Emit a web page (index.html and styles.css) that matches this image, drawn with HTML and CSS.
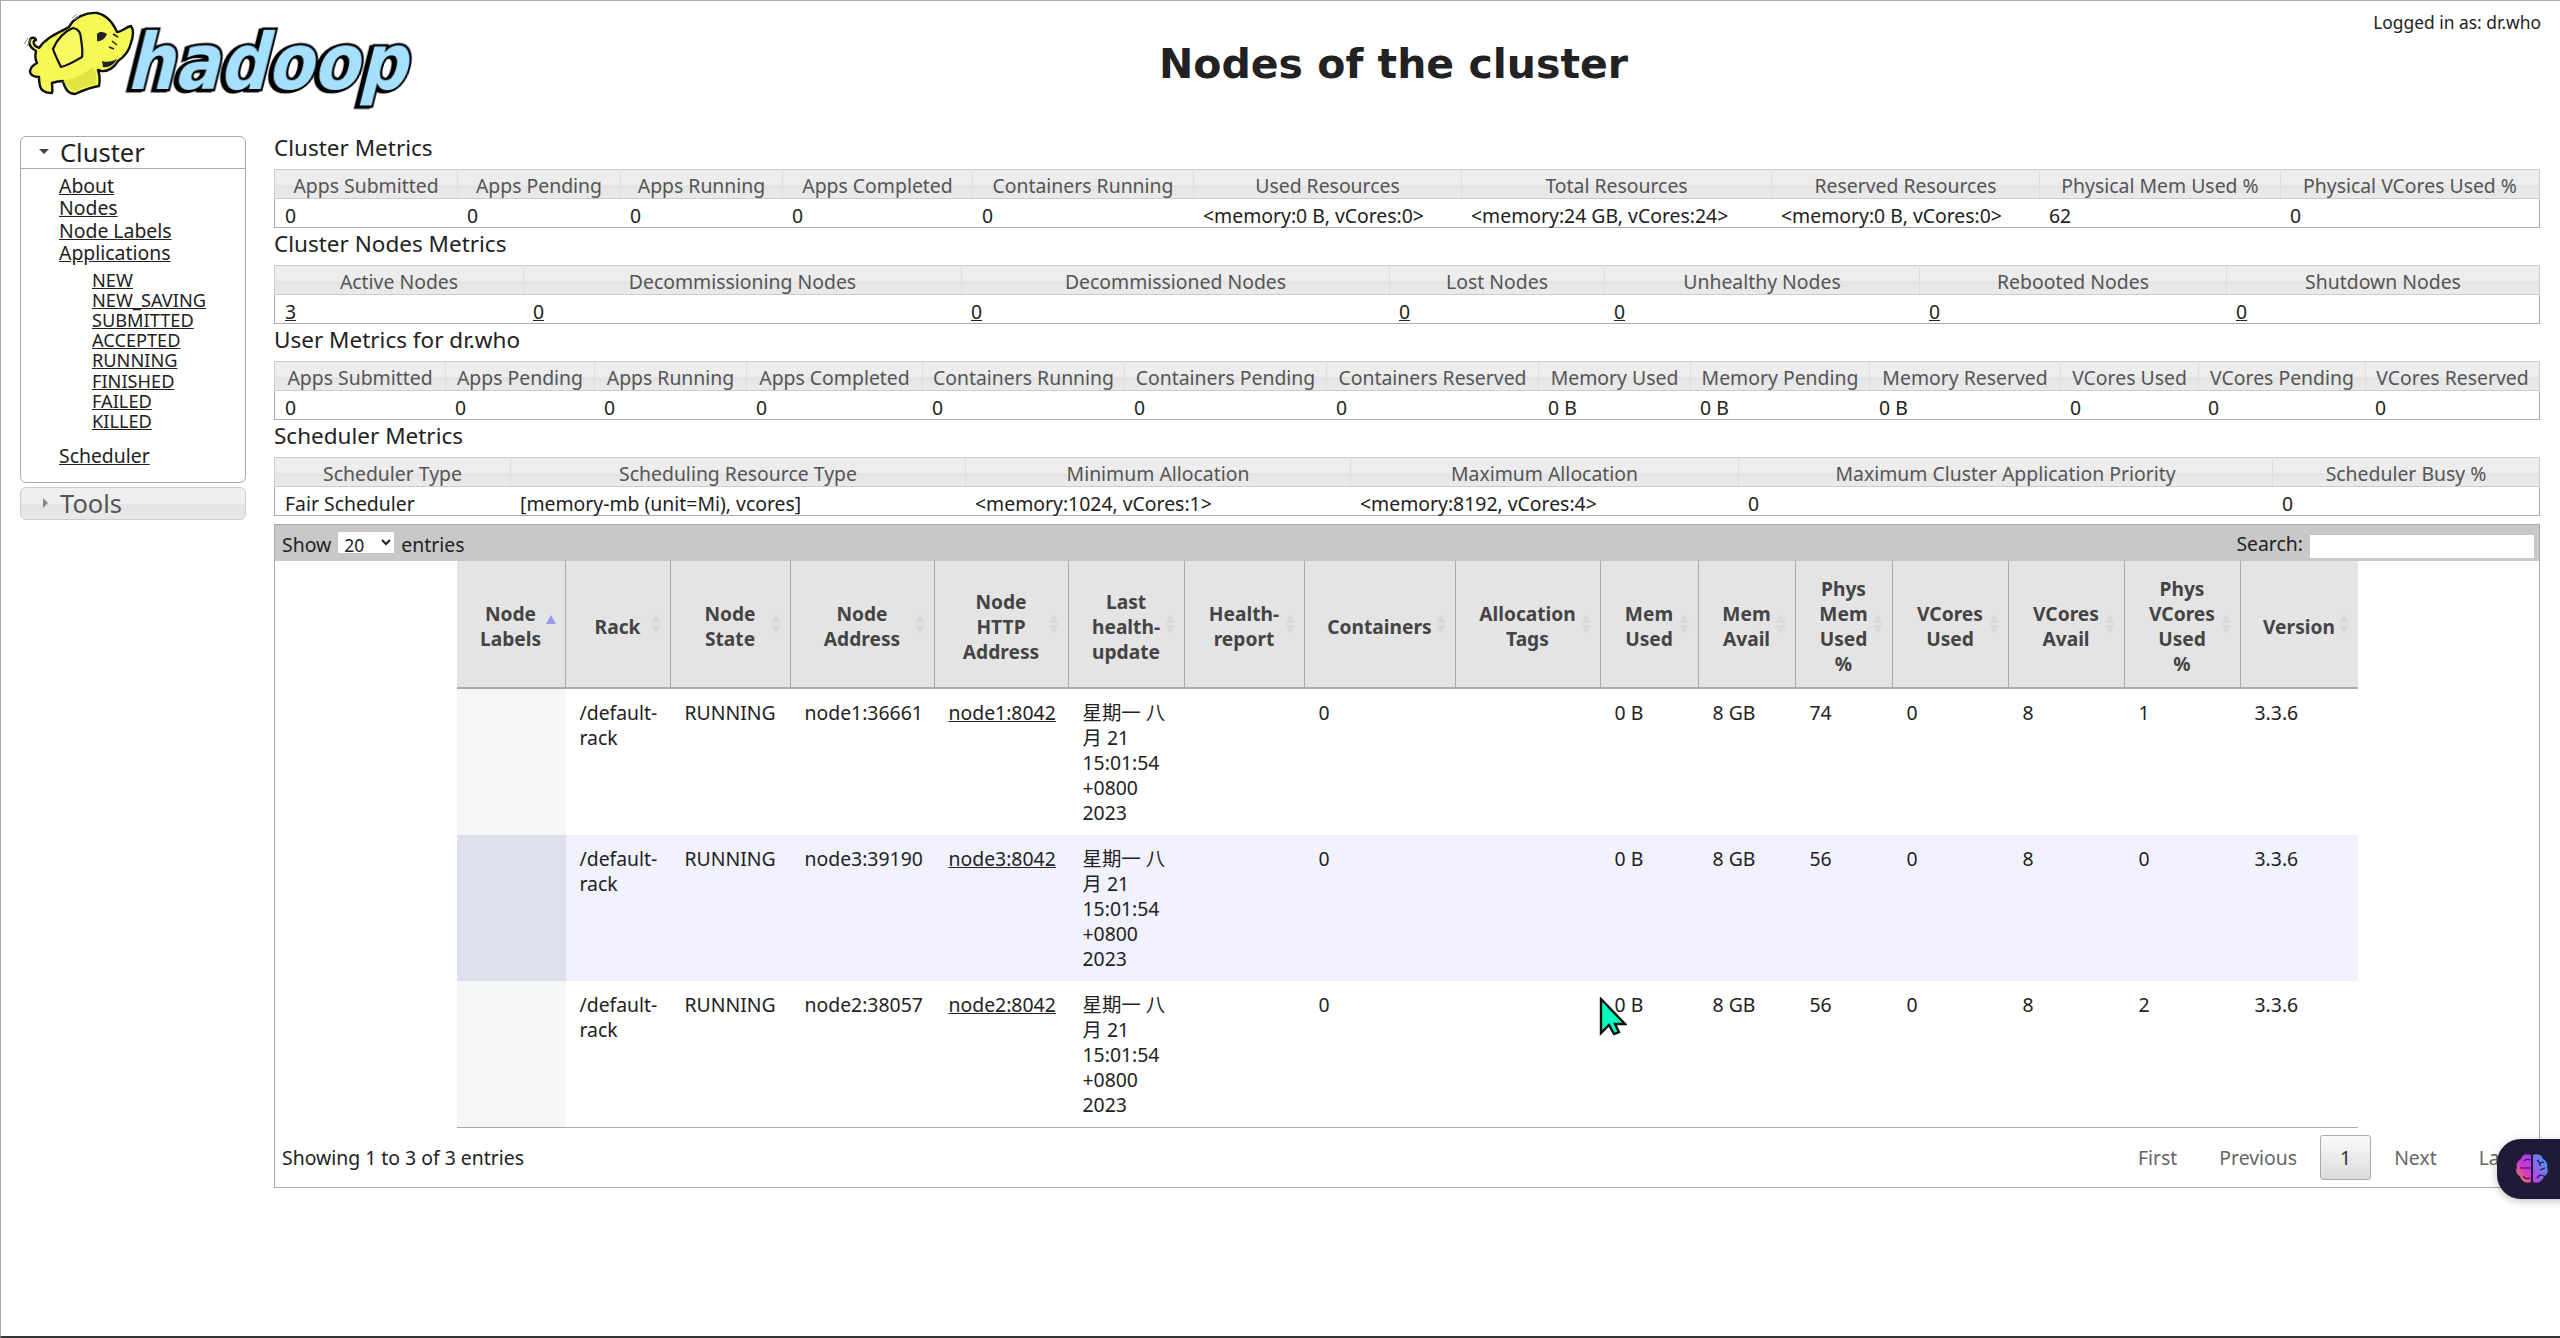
FILE: index.html
```html
<!DOCTYPE html>
<html lang="en">
<head>
    <meta charset="UTF-8">
    <meta name="viewport" content="width=device-width, initial-scale=1.0">
    <title>Nodes of the cluster</title>
    <link rel="stylesheet" href="styles.css">
</head>
<body>
<div class="page">
    <div class="header">
        <div class="logo">
            <svg width="420" height="110" viewBox="0 0 420 110">
                <text class="logo-word" x="0" y="0" transform="translate(125 88) skewX(-14)" textLength="280" lengthAdjust="spacingAndGlyphs">hadoop</text>
                <!-- elephant -->
                <path d="M35 50 C30 47 27 43 29 39 C30 36 34 36 35 39 C33 39 32 41 33 43 C34 46 37 46 38 47 C45 36 58 32 68 26 C73 16 86 11 96 12 C106 14 112 22 116 31 C120 31 125 26 130 25 C133 29 132 36 130 42 C128 50 123 56 117 60 C114 66 107 71 100 70 L97 69 C99 75 99 80 98 85 C91 86 83 89 74 93 C68 93 64 89 62 80 C57 80 54 81 51 82 C51 86 52 89 51 92 C45 92 40 90 39 85 C38 81 38 79 38 76 C33 76 29 74 29 70 C30 65 34 63 36 62 C34 58 34 54 35 50 Z" fill="#f5f855" stroke="#111" stroke-width="2.4" stroke-linejoin="round"/>
                <path d="M62 80 C72 78 82 74 92 66 C96 74 96 80 95 83 C88 84 82 86 75 90 C70 90 66 86 62 80 Z" fill="#d8dc3c" opacity=".7"/>
                <path d="M52 48 C56 38 64 30 72 27 C78 28 80 32 80 38 C81 44 82 50 81 56 C74 60 68 64 60 66 C57 60 54 54 52 48 Z" fill="#f7fa62" stroke="#111" stroke-width="2.2" stroke-linejoin="round"/>
                <path d="M96 33 C99 30 103 31 106 33 C104 38 99 41 96 40 Z" fill="#222"/>
                <path d="M112 33 L117 36 M111 40 L116 44 M108 46 L113 48" stroke="#222" stroke-width="1.5" fill="none"/>
                <path d="M101 60 C106 62 112 60 116 58 C113 64 107 67 102 66 Z" fill="#222"/>
                <path d="M71 17 L76 13 M73 19 L78 15" stroke="#999" stroke-width="1"/>
                <path d="M23 43 L27 37 M26 45 L30 38" stroke="#888" stroke-width="1"/>
            </svg>
        </div>
        <h1 class="title">Nodes of the cluster</h1>
        <div class="user">Logged in as: dr.who</div>
    </div>

    <div class="content">
        <div class="nav">
            <div class="nav-box">
                <h3 class="nav-title"><span class="arrow-down"></span>Cluster</h3>
                <ul class="nav-links">
                    <li><a href="#">About</a></li>
                    <li><a href="#">Nodes</a></li>
                    <li><a href="#">Node Labels</a></li>
                    <li><a href="#">Applications</a>
                        <ul class="nav-sub">
                            <li><a href="#">NEW</a></li>
                            <li><a href="#">NEW_SAVING</a></li>
                            <li><a href="#">SUBMITTED</a></li>
                            <li><a href="#">ACCEPTED</a></li>
                            <li><a href="#">RUNNING</a></li>
                            <li><a href="#">FINISHED</a></li>
                            <li><a href="#">FAILED</a></li>
                            <li><a href="#">KILLED</a></li>
                        </ul>
                    </li>
                    <li><a href="#">Scheduler</a></li>
                </ul>
            </div>
            <h3 class="nav-closed"><span class="arrow-right"></span>Tools</h3>
        </div>

        <div class="main">
            <h3 class="metrics-title">Cluster Metrics</h3>
            <table class="metrics m-cluster">
                <colgroup><col><col><col><col><col><col><col><col><col><col></colgroup>
                <tr><th>Apps Submitted</th><th>Apps Pending</th><th>Apps Running</th><th>Apps Completed</th><th>Containers Running</th><th>Used Resources</th><th>Total Resources</th><th>Reserved Resources</th><th>Physical Mem Used %</th><th>Physical VCores Used %</th></tr>
                <tr><td>0</td><td>0</td><td>0</td><td>0</td><td>0</td><td>&lt;memory:0 B, vCores:0&gt;</td><td>&lt;memory:24 GB, vCores:24&gt;</td><td>&lt;memory:0 B, vCores:0&gt;</td><td>62</td><td>0</td></tr>
            </table>

            <h3 class="metrics-title">Cluster Nodes Metrics</h3>
            <table class="metrics m-nodes">
                <colgroup><col><col><col><col><col><col><col></colgroup>
                <tr><th>Active Nodes</th><th>Decommissioning Nodes</th><th>Decommissioned Nodes</th><th>Lost Nodes</th><th>Unhealthy Nodes</th><th>Rebooted Nodes</th><th>Shutdown Nodes</th></tr>
                <tr><td><a href="#">3</a></td><td><a href="#">0</a></td><td><a href="#">0</a></td><td><a href="#">0</a></td><td><a href="#">0</a></td><td><a href="#">0</a></td><td><a href="#">0</a></td></tr>
            </table>

            <h3 class="metrics-title">User Metrics for dr.who</h3>
            <table class="metrics m-user">
                <colgroup><col><col><col><col><col><col><col><col><col><col><col><col><col></colgroup>
                <tr><th>Apps Submitted</th><th>Apps Pending</th><th>Apps Running</th><th>Apps Completed</th><th>Containers Running</th><th>Containers Pending</th><th>Containers Reserved</th><th>Memory Used</th><th>Memory Pending</th><th>Memory Reserved</th><th>VCores Used</th><th>VCores Pending</th><th>VCores Reserved</th></tr>
                <tr><td>0</td><td>0</td><td>0</td><td>0</td><td>0</td><td>0</td><td>0</td><td>0 B</td><td>0 B</td><td>0 B</td><td>0</td><td>0</td><td>0</td></tr>
            </table>

            <h3 class="metrics-title">Scheduler Metrics</h3>
            <table class="metrics m-sched">
                <colgroup><col><col><col><col><col><col></colgroup>
                <tr><th>Scheduler Type</th><th>Scheduling Resource Type</th><th>Minimum Allocation</th><th>Maximum Allocation</th><th>Maximum Cluster Application Priority</th><th>Scheduler Busy %</th></tr>
                <tr><td>Fair Scheduler</td><td>[memory-mb (unit=Mi), vcores]</td><td>&lt;memory:1024, vCores:1&gt;</td><td>&lt;memory:8192, vCores:4&gt;</td><td>0</td><td>0</td></tr>
            </table>

            <div class="dt">
                <div class="dt-toolbar">
                    <label class="dt-length">Show <select><option>20</option></select> entries</label>
                    <label class="dt-search">Search: <input type="text"></label>
                </div>
                <table class="nodes">
                    <colgroup><col><col><col><col><col><col><col><col><col><col><col><col><col><col><col><col></colgroup>
                    <thead>
                        <tr>
                            <th class="sort-asc">Node Labels</th>
                            <th class="sortable">Rack</th>
                            <th class="sortable">Node State</th>
                            <th class="sortable">Node Address</th>
                            <th class="sortable">Node HTTP Address</th>
                            <th class="sortable">Last health-update</th>
                            <th class="sortable">Health-report</th>
                            <th class="sortable">Containers</th>
                            <th class="sortable">Allocation Tags</th>
                            <th class="sortable">Mem Used</th>
                            <th class="sortable">Mem Avail</th>
                            <th class="sortable">Phys Mem Used %</th>
                            <th class="sortable">VCores Used</th>
                            <th class="sortable">VCores Avail</th>
                            <th class="sortable">Phys VCores Used<br>%</th>
                            <th class="sortable">Version</th>
                        </tr>
                    </thead>
                    <tbody>
                        <tr>
                            <td class="sorted"></td><td>/default-rack</td><td>RUNNING</td><td>node1:36661</td><td><a href="#">node1:8042</a></td><td>星期一 八月 21 15:01:54 +0800 2023</td><td></td><td>0</td><td></td><td>0 B</td><td>8 GB</td><td>74</td><td>0</td><td>8</td><td>1</td><td>3.3.6</td>
                        </tr>
                        <tr class="even">
                            <td class="sorted"></td><td>/default-rack</td><td>RUNNING</td><td>node3:39190</td><td><a href="#">node3:8042</a></td><td>星期一 八月 21 15:01:54 +0800 2023</td><td></td><td>0</td><td></td><td>0 B</td><td>8 GB</td><td>56</td><td>0</td><td>8</td><td>0</td><td>3.3.6</td>
                        </tr>
                        <tr>
                            <td class="sorted"></td><td>/default-rack</td><td>RUNNING</td><td>node2:38057</td><td><a href="#">node2:8042</a></td><td>星期一 八月 21 15:01:54 +0800 2023</td><td></td><td>0</td><td></td><td>0 B</td><td>8 GB</td><td>56</td><td>0</td><td>8</td><td>2</td><td>3.3.6</td>
                        </tr>
                    </tbody>
                </table>
                <div class="dt-footer">
                    <div class="dt-info">Showing 1 to 3 of 3 entries</div>
                    <div class="pager">
                        <a href="#">First</a>
                        <a href="#">Previous</a>
                        <a href="#" class="current">1</a>
                        <a href="#">Next</a>
                        <a href="#">Last</a>
                    </div>
                </div>
            </div>
        </div>
    </div>

    <svg class="cursor" width="28" height="40" viewBox="0 0 28 40">
        <path d="M2 2 L26 27 L16 27 L20 35 L15 37 L10 28 L2 36 Z" fill="#00ffbf" stroke="#111" stroke-width="2.4" stroke-linejoin="miter"/>
    </svg>

    <div class="badge">
        <svg width="34" height="32" viewBox="0 0 34 32">
            <defs>
                <linearGradient id="lobeL" x1="0" y1="1" x2="0.6" y2="0">
                    <stop offset="0" stop-color="#f79a1e"/>
                    <stop offset="0.55" stop-color="#d836c8"/>
                    <stop offset="1" stop-color="#b03af0"/>
                </linearGradient>
                <linearGradient id="lobeR" x1="0" y1="1" x2="0.8" y2="0">
                    <stop offset="0" stop-color="#c93ae0"/>
                    <stop offset="1" stop-color="#3f9bf5"/>
                </linearGradient>
            </defs>
            <path d="M16 2 C11 0 7 2 6 6 C2 8 1 12 2 14 C0 18 2 22 5 23 C6 28 11 31 16 29 Z" fill="url(#lobeL)"/>
            <path d="M18 2 C23 0 27 2 28 6 C32 8 33 12 32 15 C34 18 32 22 29 23 C28 28 23 31 18 29 Z" fill="url(#lobeR)"/>
            <path d="M5 15 H16 M9 8 C11 6 13 6 15 7 M8 23 C10 26 13 26 15 25 M22 7 L25 10 L29 9 M25 10 L25 13 M22 25 L25 22 L29 23 M25 17 L30 15" stroke="#1e1b3a" stroke-width="1.2" fill="none"/>
        </svg>
    </div>
</div>
</body>
</html>
```

FILE: styles.css
```css
html, body {
    margin: 0;
    padding: 0;
}
body {
    font-family: "Noto Sans", "Noto Sans CJK SC", sans-serif;
    font-size: 19.4px;
    color: #222;
    background-color: #fff;
}
a {
    color: #222;
}
.page {
    position: relative;
    box-sizing: border-box;
    height: 100vh;
    overflow: hidden;
    border-top: 1px solid #aaa;
    border-left: 1px solid #aaa;
    border-bottom: 2px solid #333;
}

/* header */
.header {
    display: flex;
    height: 131px;
}
.logo {
    flex: none;
    width: 226px;
}
.logo svg {
    display: block;
    overflow: visible;
}
.logo-word {
    font-family: "DejaVu Sans", sans-serif;
    font-weight: bold;
    font-size: 77px;
    fill: #a5e1ff;
    stroke: #000;
    stroke-width: 5px;
    paint-order: stroke;
    filter: drop-shadow(-3px 1px 0 #000);
}
.title {
    flex: 1;
    margin: 0;
    padding-top: 36px;
    text-align: center;
    font-family: "DejaVu Sans", sans-serif;
    font-size: 41px;
    line-height: 54px;
    font-weight: bold;
    color: #222;
}
.user {
    position: absolute;
    top: 9px;
    right: 19px;
    font-size: 17.4px;
    line-height: 24px;
}

/* layout */
.content {
    display: flex;
    gap: 28px;
    padding-left: 19px;
}
.nav {
    flex: none;
    width: 226px;
    padding-top: 4px;
}
.main {
    flex: none;
    width: 2266px;
}

/* left nav */
.nav-box {
    box-sizing: border-box;
    height: 347px;
    border: 1px solid #aaa;
    border-radius: 6px;
}
.nav-title {
    margin: 0;
    height: 31px;
    line-height: 31px;
    padding-left: 39px;
    font-size: 25.5px;
    font-weight: normal;
    color: #222;
    border-bottom: 1px solid #aaa;
    position: relative;
}
.arrow-down {
    position: absolute;
    left: 18px;
    top: 12px;
    border-left: 5px solid transparent;
    border-right: 5px solid transparent;
    border-top: 5px solid #444;
}
.arrow-right {
    position: absolute;
    left: 22px;
    top: 10px;
    border-top: 5px solid transparent;
    border-bottom: 5px solid transparent;
    border-left: 5px solid #888;
}
.nav-links {
    list-style: none;
    margin: 0;
    padding: 6px 0 0 38px;
    font-size: 19.4px;
    line-height: 22.4px;
}
.nav-sub {
    list-style: none;
    margin: 5px 0 14px 0;
    padding: 0 0 0 33px;
    font-size: 18.2px;
    line-height: 20.2px;
}
.nav-closed {
    position: relative;
    box-sizing: border-box;
    height: 33px;
    margin: 4px 0 0 0;
    line-height: 31px;
    padding-left: 39px;
    font-size: 25.5px;
    font-weight: normal;
    color: #555;
    border: 1px solid #ccc;
    border-radius: 6px;
    background: linear-gradient(#efefef 0, #efefef 50%, #e4e4e4 50%, #e9e9e9 100%);
}

/* metric tables */
.metrics-title {
    margin: 0;
    height: 32px;
    line-height: 32px;
    padding-bottom: 5px;
    font-size: 22.5px;
    font-weight: normal;
    color: #222;
}
.metrics {
    width: 2266px;
    table-layout: fixed;
    border-collapse: separate;
    border-spacing: 0;
}
.metrics th {
    box-sizing: border-box;
    height: 30px;
    padding: 3px 0 0 0;
    line-height: 22px;
    font-weight: normal;
    color: #555;
    white-space: nowrap;
    background: linear-gradient(#ededed 0, #ededed 55%, #e4e4e4 55%, #eaeaea 100%);
    border-top: 1px solid #ccc;
    border-bottom: 1px solid #ccc;
    border-left: 1px solid #ddd;
}
.metrics th:first-child {
    border-left: 1px solid #ccc;
}
.metrics th:last-child {
    border-right: 1px solid #ccc;
}
.metrics td {
    box-sizing: border-box;
    height: 29px;
    padding: 6px 0 0 10px;
    line-height: 22px;
    white-space: nowrap;
    border-bottom: 1px solid #aaa;
}
.metrics td:first-child {
    border-left: 1px solid #aaa;
}
.metrics td:last-child {
    border-right: 1px solid #aaa;
}
.m-cluster col:nth-child(1) { width: 183px; }
.m-cluster col:nth-child(2) { width: 163px; }
.m-cluster col:nth-child(3) { width: 162px; }
.m-cluster col:nth-child(4) { width: 190px; }
.m-cluster col:nth-child(5) { width: 221px; }
.m-cluster col:nth-child(6) { width: 268px; }
.m-cluster col:nth-child(7) { width: 310px; }
.m-cluster col:nth-child(8) { width: 268px; }
.m-cluster col:nth-child(9) { width: 241px; }
.m-cluster col:nth-child(10) { width: 260px; }

.m-nodes col:nth-child(1) { width: 249px; }
.m-nodes col:nth-child(2) { width: 438px; }
.m-nodes col:nth-child(3) { width: 428px; }
.m-nodes col:nth-child(4) { width: 215px; }
.m-nodes col:nth-child(5) { width: 315px; }
.m-nodes col:nth-child(6) { width: 307px; }
.m-nodes col:nth-child(7) { width: 314px; }

.m-user col:nth-child(1) { width: 171px; }
.m-user col:nth-child(2) { width: 149px; }
.m-user col:nth-child(3) { width: 152px; }
.m-user col:nth-child(4) { width: 176px; }
.m-user col:nth-child(5) { width: 202px; }
.m-user col:nth-child(6) { width: 202px; }
.m-user col:nth-child(7) { width: 212px; }
.m-user col:nth-child(8) { width: 152px; }
.m-user col:nth-child(9) { width: 179px; }
.m-user col:nth-child(10) { width: 191px; }
.m-user col:nth-child(11) { width: 138px; }
.m-user col:nth-child(12) { width: 167px; }
.m-user col:nth-child(13) { width: 175px; }

.m-sched col:nth-child(1) { width: 236px; }
.m-sched col:nth-child(2) { width: 455px; }
.m-sched col:nth-child(3) { width: 385px; }
.m-sched col:nth-child(4) { width: 388px; }
.m-sched col:nth-child(5) { width: 534px; }
.m-sched col:nth-child(6) { width: 268px; }

/* nodes table */
.dt {
    box-sizing: border-box;
    width: 2266px;
    margin-top: 8px;
    border-left: 1px solid #aaa;
    border-right: 1px solid #aaa;
    border-bottom: 1px solid #aaa;
}
.dt-toolbar {
    box-sizing: border-box;
    height: 37px;
    display: flex;
    justify-content: space-between;
    align-items: center;
    padding: 2px 5px 0 7px;
    background-color: #c8c8c8;
    border-top: 1px solid #aaa;
    color: #222;
}
.dt-length select {
    width: 56px;
    height: 21px;
    margin: 0 2px;
    padding: 0 0 0 2px;
    border: 0;
    background-color: #fff;
    font-family: inherit;
    font-size: 17.5px;
    color: #222;
}
.dt-search input {
    box-sizing: border-box;
    width: 224px;
    height: 23px;
    margin-left: 2px;
    padding: 0;
    border: 0;
    background-color: #fff;
    vertical-align: middle;
}
.nodes {
    width: 1901px;
    margin: 0 auto;
    table-layout: fixed;
    border-collapse: separate;
    border-spacing: 0;
    border-bottom: 1px solid #aaa;
}
.nodes col:nth-child(1) { width: 109px; }
.nodes col:nth-child(2) { width: 105px; }
.nodes col:nth-child(3) { width: 120px; }
.nodes col:nth-child(4) { width: 144px; }
.nodes col:nth-child(5) { width: 134px; }
.nodes col:nth-child(6) { width: 116px; }
.nodes col:nth-child(7) { width: 120px; }
.nodes col:nth-child(8) { width: 151px; }
.nodes col:nth-child(9) { width: 145px; }
.nodes col:nth-child(10) { width: 98px; }
.nodes col:nth-child(11) { width: 97px; }
.nodes col:nth-child(12) { width: 97px; }
.nodes col:nth-child(13) { width: 116px; }
.nodes col:nth-child(14) { width: 116px; }
.nodes col:nth-child(15) { width: 116px; }
.nodes col:nth-child(16) { width: 117px; }
.nodes th {
    position: relative;
    box-sizing: border-box;
    height: 128px;
    padding: 4px 18px 0;
    text-align: center;
    font-size: 19.2px;
    font-weight: bold;
    line-height: 25px;
    color: #444;
    background-color: #e4e4e4;
    border-bottom: 2px solid #aaa;
    border-right: 1px solid #aaa;
}
.nodes th:last-child {
    border-right: 0;
}
.nodes td {
    box-sizing: border-box;
    height: 146px;
    padding: 11px 14px 10px;
    vertical-align: top;
    line-height: 25px;
}
.nodes tr.even td {
    background-color: #f1f2fd;
}
.nodes td.sorted {
    background-color: #f6f6f6;
}
.nodes tr.even td.sorted {
    background-color: #dfe0ee;
}

/* sort arrows */
.sortable::before,
.sortable::after,
.sort-asc::after {
    content: "";
    position: absolute;
    right: 9px;
    border-left: 5px solid transparent;
    border-right: 5px solid transparent;
}
.sortable::before {
    top: 53px;
    border-bottom: 9px solid #d9d9d9;
}
.sortable::after {
    top: 64px;
    border-top: 9px solid #d9d9d9;
}
.sort-asc::after {
    top: 54px;
    border-bottom: 9px solid #9999ee;
}

.dt-footer {
    height: 59px;
    display: flex;
    justify-content: space-between;
    align-items: center;
    padding: 0 2px 0 7px;
}
.pager {
    display: flex;
    align-items: center;
}
.pager a {
    padding: 0 21px;
    color: #666;
    text-decoration: none;
}
.pager .current {
    box-sizing: border-box;
    width: 51px;
    height: 45px;
    margin: 0 2px;
    padding: 0;
    line-height: 43px;
    text-align: center;
    color: #333;
    border: 1px solid #aaa;
    border-radius: 3px;
    background: linear-gradient(#fafafa, #dcdcdc);
}

/* overlays */
.cursor {
    position: absolute;
    left: 1598px;
    top: 996px;
}
.badge {
    position: absolute;
    left: 2496px;
    top: 1138px;
    width: 70px;
    height: 60px;
    display: flex;
    align-items: center;
    padding-left: 18px;
    box-sizing: border-box;
    background-color: #1e1b3a;
    border-radius: 24px 0 0 24px;
    box-shadow: 0 2px 8px rgba(0, 0, 0, 0.25);
}
```
